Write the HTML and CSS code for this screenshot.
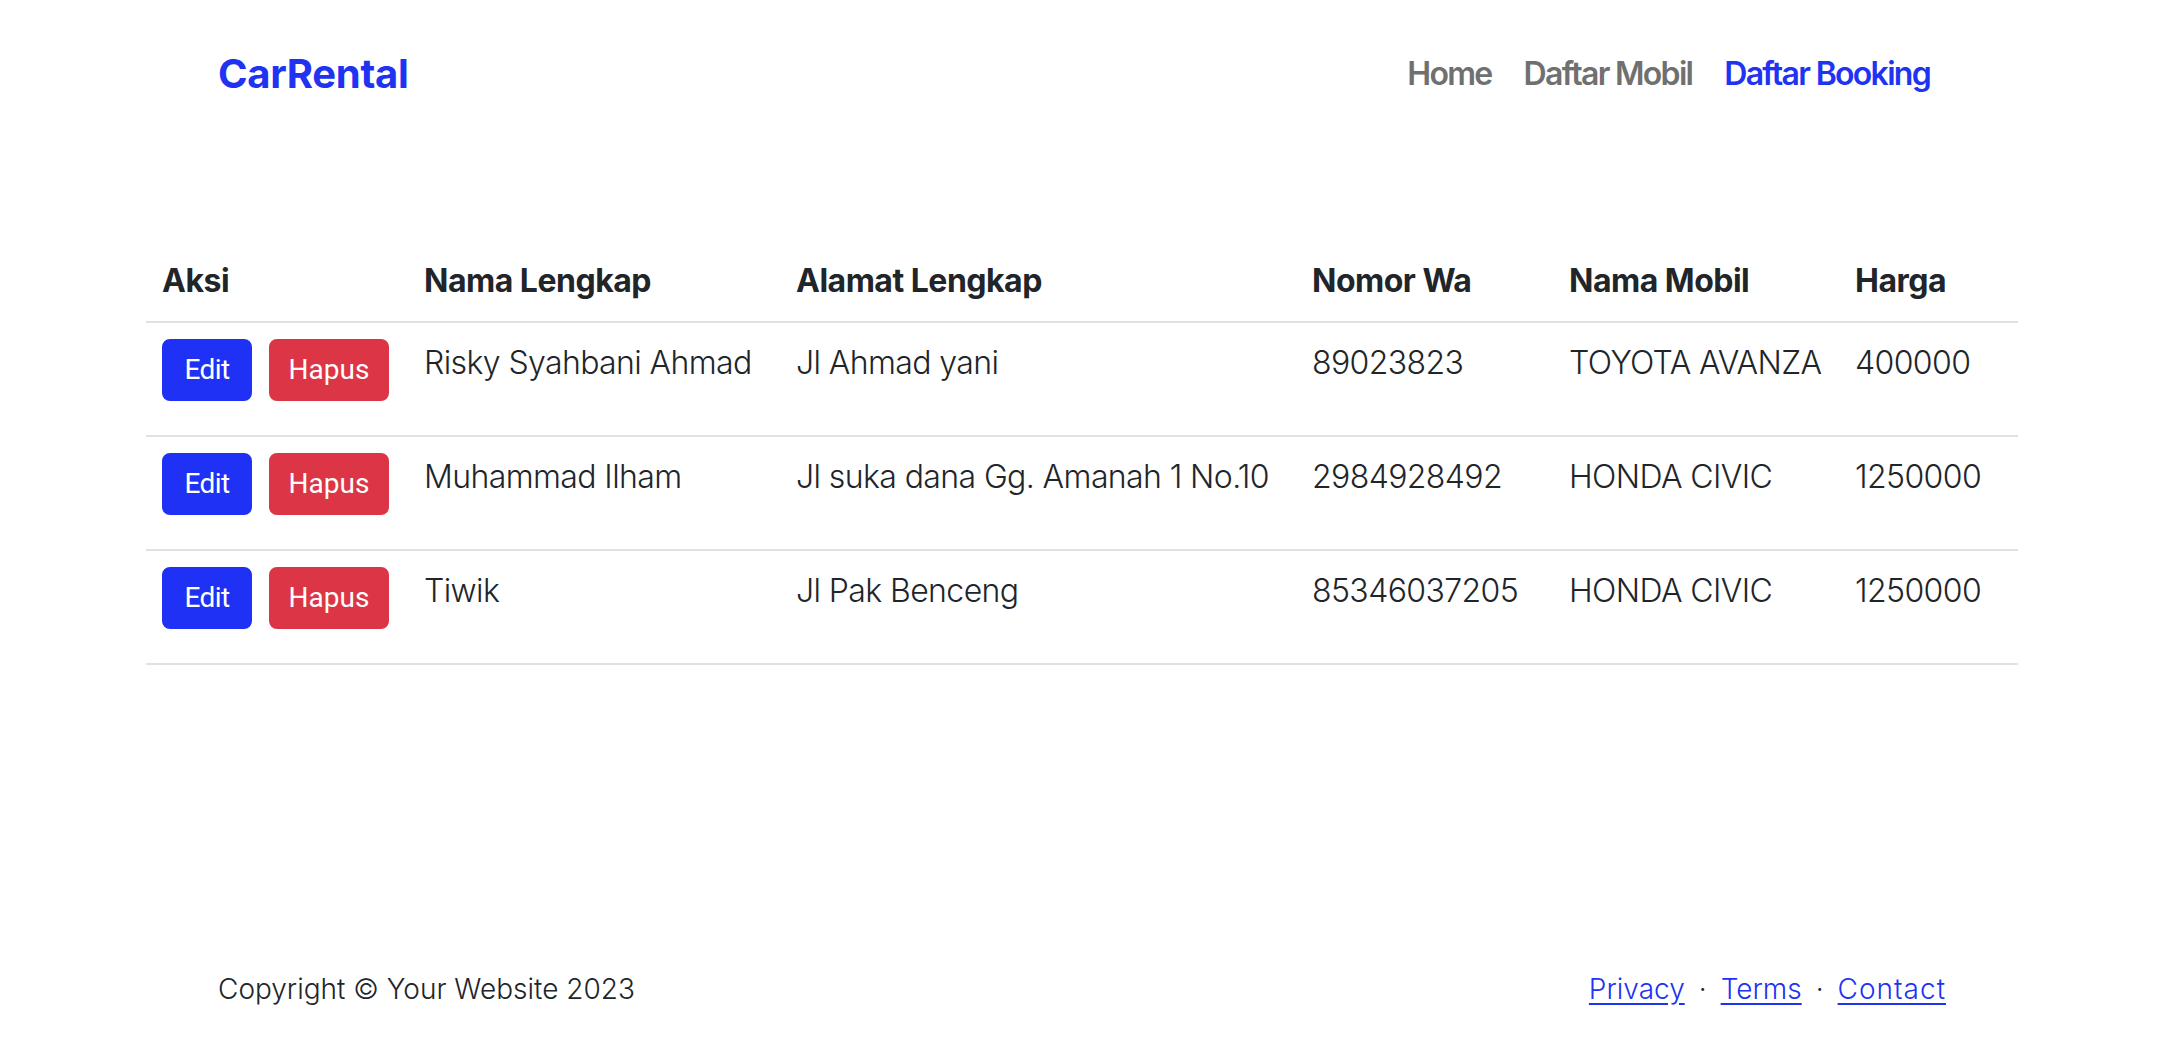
FILE: index.html
```html
<!DOCTYPE html>
<html lang="id">
<head>
<meta charset="utf-8">
<title>CarRental</title>
<link rel="stylesheet" href="styles.css">
</head>
<body>
<nav class="navbar">
  <div class="nav-inner">
    <a class="brand" href="#">CarRental</a>
    <ul class="nav-links">
      <li><a class="nav-link" href="#">Home</a></li>
      <li><a class="nav-link" href="#">Daftar Mobil</a></li>
      <li><a class="nav-link active" href="#">Daftar Booking</a></li>
    </ul>
  </div>
</nav>
<main class="section">
  <div class="container">
    <table class="table">
      <colgroup>
        <col class="c1"><col class="c2"><col class="c3"><col class="c4"><col class="c5"><col class="c6">
      </colgroup>
      <thead>
        <tr><th>Aksi</th><th>Nama Lengkap</th><th>Alamat Lengkap</th><th>Nomor Wa</th><th>Nama Mobil</th><th>Harga</th></tr>
      </thead>
      <tbody>
        <tr>
          <td><div class="actions"><a class="btn btn-edit" href="#">Edit</a><button class="btn btn-del">Hapus</button></div></td>
          <td>Risky Syahbani Ahmad</td><td>Jl Ahmad yani</td><td>89023823</td><td>TOYOTA AVANZA</td><td>400000</td>
        </tr>
        <tr>
          <td><div class="actions"><a class="btn btn-edit" href="#">Edit</a><button class="btn btn-del">Hapus</button></div></td>
          <td>Muhammad Ilham</td><td>Jl suka dana Gg. Amanah 1 No.10</td><td>2984928492</td><td>HONDA CIVIC</td><td>1250000</td>
        </tr>
        <tr>
          <td><div class="actions"><a class="btn btn-edit" href="#">Edit</a><button class="btn btn-del">Hapus</button></div></td>
          <td>Tiwik</td><td>Jl Pak Benceng</td><td>85346037205</td><td>HONDA CIVIC</td><td>1250000</td>
        </tr>
      </tbody>
    </table>
  </div>
</main>
<footer class="footer">
  <div class="foot-inner">
    <div class="copy">Copyright © Your Website 2023</div>
    <div class="foot-links">
      <a href="#">Privacy</a><span class="sep">·</span><a href="#">Terms</a><span class="sep">·</span><a class="wide" href="#">Contact</a>
    </div>
  </div>
</footer>
</body>
</html>
```

FILE: styles.css
```css
* { box-sizing: border-box; }
html, body { margin: 0; padding: 0; }
body {
  min-height: 100vh;
  display: flex;
  flex-direction: column;
  font-family: "Inter", "Liberation Sans", sans-serif;
  font-size: 32px;
  line-height: 1.5;
  color: #212529;
  background: #fff;
}
a { text-decoration: none; }

.navbar { padding: 34px 0 31px; }
.nav-inner {
  width: 1920px;
  margin: 0 auto;
  padding: 0 96px;
  display: flex;
  align-items: center;
  justify-content: space-between;
}
.brand {
  font-size: 40px;
  font-weight: 700;
  line-height: 60px;
  padding: 10px 0;
  color: #2133f2;
  letter-spacing: -0.3px;
}
.nav-links {
  list-style: none;
  margin: 0;
  padding: 0;
  display: flex;
}
.nav-link {
  display: block;
  padding: 16px 16px;
  font-weight: 600;
  color: #707070;
  letter-spacing: -1.7px;
}
.nav-link.active { color: #2133f2; }

.section { padding: 96px 0; }
.container {
  width: 1920px;
  margin: 0 auto;
  padding: 0 24px;
}
.table {
  width: 100%;
  table-layout: fixed;
  border-collapse: collapse;
  vertical-align: top;
  margin-bottom: 32px;
}
.c1 { width: 262px; }
.c2 { width: 372px; }
.c3 { width: 516px; }
.c4 { width: 257px; }
.c5 { width: 286px; }
.c6 { width: 179px; }
.table th, .table td {
  padding: 16px;
  text-align: left;
  vertical-align: top;
  border-bottom: 2px solid #dee2e6;
  white-space: nowrap;
}
.table th { font-weight: 700; letter-spacing: -0.5px; }
.table td { font-weight: 300; letter-spacing: -0.6px; }
.actions {
  height: 80px;
  display: flex;
  align-items: flex-start;
  gap: 17px;
}
.btn {
  display: inline-block;
  font-family: "Roboto", "Liberation Sans", sans-serif;
  font-size: 28px;
  line-height: 42px;
  font-weight: 400;
  border: 2px solid transparent;
  border-radius: 8px;
  color: #fff;
  text-align: center;
  cursor: pointer;
  padding: 8px 0;
}
.btn-edit { background: #1f31f4; border-color: #1f31f4; width: 90px; }
.btn-del { background: #dc3545; border-color: #dc3545; width: 120px; }

.footer {
  margin-top: auto;
  padding: 48px 0;
}
.foot-inner {
  width: 1920px;
  margin: 0 auto;
  padding: 0 96px;
  display: flex;
  justify-content: space-between;
  align-items: center;
  font-size: 28px;
  line-height: 42px;
  font-weight: 300;
}
.foot-links a { color: #2133f2; text-decoration: underline; text-underline-offset: 4px; }
.foot-links a.wide { letter-spacing: 1px; }
.sep { margin: 0 14px; color: #212529; }
```
